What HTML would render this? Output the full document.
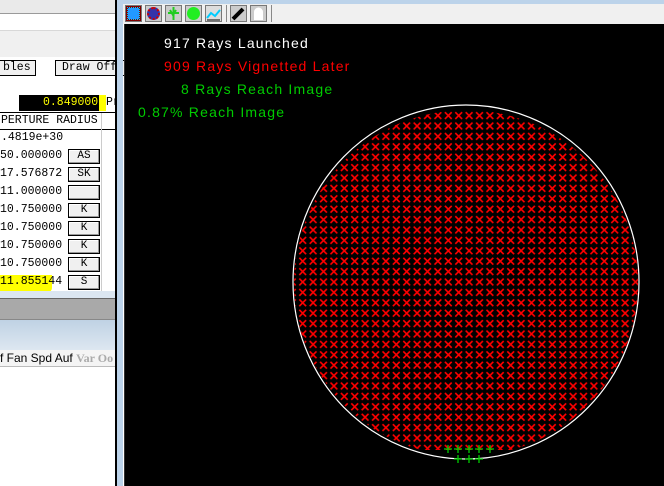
<!DOCTYPE html>
<html><head><meta charset="utf-8"><style>
*{margin:0;padding:0;box-sizing:border-box}
body{width:664px;height:486px;overflow:hidden;background:#fff;position:relative;font-family:"Liberation Mono",monospace}
.a{position:absolute}
.t{font-size:11.5px;color:#000;white-space:nowrap;letter-spacing:0px}
.btn{position:absolute;left:68px;width:32px;height:15px;border:1px solid #000;background:#f0f0f0;font-size:11px;text-align:center;line-height:13px;font-family:"Liberation Mono",monospace;box-shadow:inset -1px -1px #999, inset 1px 1px #fff}
.ov{position:absolute;font-family:"Liberation Sans",sans-serif;font-size:14px;letter-spacing:1.2px;white-space:nowrap}
.ic{position:absolute;top:5px;width:17px;height:17px;border:1px solid #777;background:#ccc}
</style></head><body>
<div class="a" style="left:0;top:0;width:116px;height:14px;background:#eaeaea;border-bottom:1px solid #9a9a9a"></div>
<div class="a" style="left:0;top:30px;width:116px;height:27px;background:#f0f0f0;border-top:1px solid #d8d8d8"></div>
<div class="a" style="left:0;top:57px;width:116px;height:22px;background:#fff"></div>
<div class="a t" style="left:-2px;top:60px;width:38px;height:16px;border:1px solid #000;background:#f0f0f0;padding-left:4px;line-height:14px">bles</div>
<div class="a t" style="left:55px;top:60px;width:70px;height:16px;border:1px solid #000;background:#f0f0f0;padding-left:6px;line-height:14px">Draw Off</div>
<div class="a" style="left:19px;top:95px;width:80px;height:16px;background:#000"></div>
<div class="a t" style="left:43px;top:96px;color:#ff0">0.849000</div>
<div class="a" style="left:99px;top:95px;width:7px;height:16px;background:#ff0"></div>
<div class="a t" style="left:106px;top:96px">Pr</div>
<div class="a" style="left:0;top:112px;width:116px;height:1px;background:#000"></div>
<div class="a t" style="left:1px;top:114px">PERTURE RADIUS</div>
<div class="a" style="left:0;top:129px;width:116px;height:1px;background:#000"></div>
<div class="a" style="left:101px;top:113px;width:1px;height:180px;background:#ccc"></div>
<div class="a t" style="left:1px;top:131px">.4819e+30</div>
<div class="a t" style="left:0;top:149px">50.000000</div><div class="btn" style="top:149px">AS</div>
<div class="a t" style="left:0;top:167px">17.576872</div><div class="btn" style="top:167px">SK</div>
<div class="a t" style="left:0;top:185px">11.000000</div><div class="btn" style="top:185px"></div>
<div class="a t" style="left:0;top:203px">10.750000</div><div class="btn" style="top:203px">K</div>
<div class="a t" style="left:0;top:221px">10.750000</div><div class="btn" style="top:221px">K</div>
<div class="a t" style="left:0;top:239px">10.750000</div><div class="btn" style="top:239px">K</div>
<div class="a t" style="left:0;top:257px">10.750000</div><div class="btn" style="top:257px">K</div>
<div class="a" style="left:0;top:275px;width:52px;height:17px;background:#ff0;border-radius:0 0 4px 0"></div>
<div class="a t" style="left:0;top:275px">11.855144</div><div class="btn" style="top:275px">S</div>
<div class="a" style="left:0;top:291px;width:116px;height:7px;background:#dbe6f1"></div>
<div class="a" style="left:0;top:298px;width:116px;height:22px;background:#a9a9a9;border-top:1px solid #666;border-bottom:1px solid #888"></div>
<div class="a" style="left:0;top:320px;width:116px;height:30px;background:linear-gradient(#bfd2e4,#dde7f1)"></div>
<div class="a" style="left:0;top:350px;width:116px;height:17px;background:#f4f4f4;border-bottom:1px solid #bbb;font-family:'Liberation Sans',sans-serif;font-size:12px;line-height:17px;white-space:nowrap;overflow:hidden">f Fan Spd Auf <span style="color:#aaa;font-weight:bold;font-family:'Liberation Serif',serif">Var Oo</span></div>
<div class="a" style="left:115px;top:0;width:2px;height:486px;background:#000"></div>
<div class="a" style="left:117px;top:0;width:6px;height:486px;background:#bcd3ea"></div>
<div class="a" style="left:123px;top:0;width:541px;height:4px;background:#bcd3ea"></div>
<div class="a" style="left:123px;top:4px;width:541px;height:20px;background:#f0f0f0"></div>
<div class="ic" style="left:125px;background:#800000"><div style="margin:2px;width:11px;height:11px;background:#29f;outline:1px dotted #0cf"></div></div>
<div class="ic" style="left:145px"><div style="margin:1px;width:13px;height:13px;border-radius:50%;border:2px dotted #c00;background:#33a"></div></div>
<div class="ic" style="left:165px"><svg width="15" height="15"><path d="M7.5 1v13M2 7h11M4 4l3 5 3-5" stroke="#2c2" stroke-width="2" fill="none"/></svg></div>
<div class="ic" style="left:185px"><div style="margin:1px;width:13px;height:13px;border-radius:50%;background:#2e2"></div></div>
<div class="ic" style="left:205px;background:#ddd"><svg width="15" height="15"><polyline points="1,12 5,7 9,10 14,4" fill="none" stroke="#0cf" stroke-width="2"/><polyline points="1,14 14,14" stroke="#000"/></svg></div>
<div class="a" style="left:226px;top:5px;width:1px;height:17px;background:#888"></div>
<div class="ic" style="left:230px;background:#ccc"><svg width="15" height="15"><path d="M2 13 L12 3" stroke="#000" stroke-width="4"/></svg></div>
<div class="ic" style="left:250px;background:#ccc"><svg width="15" height="15"><path d="M3 14 V6 a4.5 4.5 0 0 1 9 0 V14 Z" fill="#fff"/></svg></div>
<div class="a" style="left:271px;top:5px;width:1px;height:17px;background:#888"></div>
<div class="a" style="left:124px;top:24px;width:540px;height:462px;background:#000;border-left:1px solid #333"></div>
<div class="ov" style="left:164px;top:35px;color:#fff">917 Rays Launched</div>
<div class="ov" style="left:164px;top:58px;color:#f00">909 Rays Vignetted Later</div>
<div class="ov" style="left:181px;top:81px;color:#0c0">8 Rays Reach Image</div>
<div class="ov" style="left:138px;top:104px;color:#0c0">0.87% Reach Image</div>
<svg class="a" style="left:0;top:0" width="664" height="486">
<defs>
<pattern id="p" patternUnits="userSpaceOnUse" x="401.5" y="380.8" width="10.4" height="10.4">
<path d="M1.8 1.8 L8.6 8.6 M8.6 1.8 L1.8 8.6" stroke="#f00" stroke-width="1.7"/>
</pattern>
<clipPath id="c"><ellipse cx="466" cy="283" rx="172" ry="173"/></clipPath>
</defs>
<rect x="290" y="100" width="360" height="350" fill="url(#p)" clip-path="url(#c)"/>
<ellipse cx="466" cy="282" rx="173" ry="177" fill="none" stroke="#fff" stroke-width="1.2"/>
<g stroke="#0c0" stroke-width="1.3">
<path d="M444 449h8M448 445v8M454 449h8M458 445v8M465 449h8M469 445v8M475 449h8M479 445v8M486 449h8M490 445v8"/>
<path d="M454 459h8M458 455v8M465 459h8M469 455v8M475 459h8M479 455v8"/>
</g>
</svg>
</body></html>
